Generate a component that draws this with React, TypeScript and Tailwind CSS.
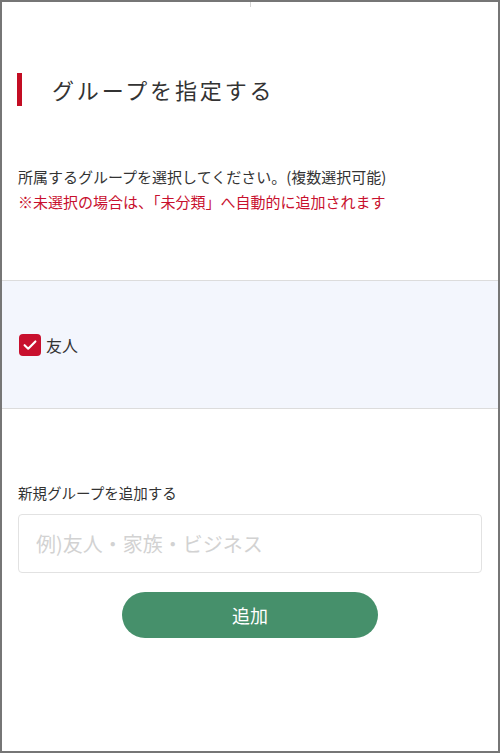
export default function App() {
  return (
    <div
      className="w-[500px] h-[753px] border-2 border-[#767676] bg-white flex flex-col text-[#333]"
      style={{ fontFamily: '"Noto Sans CJK JP", "Noto Sans", sans-serif' }}
    >
      {/* small tick at top */}
      <div className="mx-auto w-px h-[5px] bg-[#d4d4d4]" />

      {/* heading */}
      <div className="mt-[66px] px-[15px] flex items-center h-[33px]">
        <span className="w-[5px] h-[33px] bg-[#c30d23]" />
        <h1 className="ml-[30px] -mt-[2px] text-[22px] leading-none tracking-[0.13em] text-[#333]">
          グループを指定する
        </h1>
      </div>

      {/* description */}
      <div className="mt-[58px] px-[16px] text-[15px] leading-[25px]">
        <p>所属するグループを選択してください。(複数選択可能)</p>
        <p className="text-[#c8102e]">※未選択の場合は、「未分類」へ自動的に追加されます</p>
      </div>

      {/* group list */}
      <div className="mt-[66px] h-[129px] border-y border-[#dcdcdc] bg-[#f3f6fd] px-[17px] flex items-center">
        <label className="flex items-center gap-[5px]">
          <span className="w-[22px] h-[22px] rounded-[4px] bg-[#c8102e] flex items-center justify-center">
            <svg width="18" height="18" viewBox="0 0 16 16" fill="none">
              <path
                d="M3.2 8.2 L6.4 11.3 L12.8 4.8"
                stroke="white"
                strokeWidth="1.9"
                strokeLinecap="round"
                strokeLinejoin="round"
              />
            </svg>
          </span>
          <span className="text-[16px] leading-none">友人</span>
        </label>
      </div>

      {/* add new group */}
      <div className="mt-[74px] px-[16px]">
        <p className="text-[14.5px] leading-[20px]">新規グループを追加する</p>
        <input
          type="text"
          placeholder="例)友人・家族・ビジネス"
          className="mt-[11px] w-full h-[59px] border border-[#e2e2e2] rounded-[4px] px-[17px] text-[20px] placeholder:text-[#d2d2d2] outline-none"
        />
        <button className="mt-[19px] mx-auto block w-[256px] h-[46px] rounded-full bg-[#46906b] text-white text-[18px]">
          追加
        </button>
      </div>
    </div>
  );
}
